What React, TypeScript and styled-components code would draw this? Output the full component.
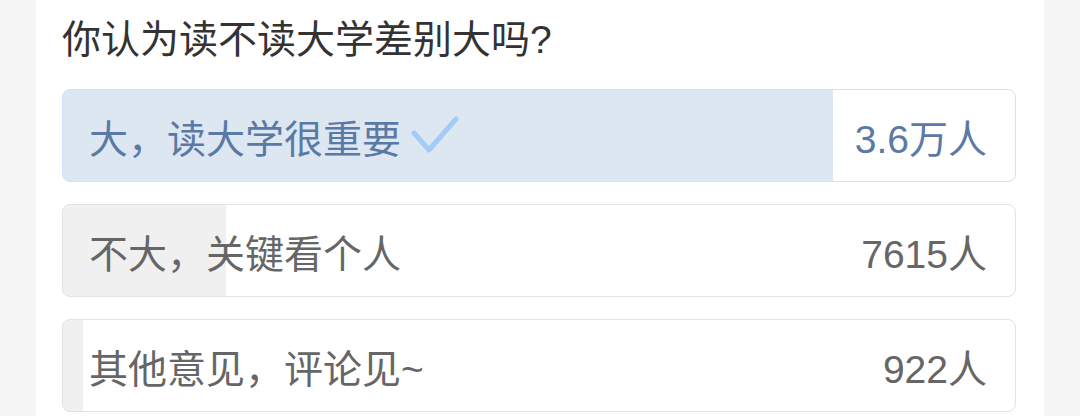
import styled, { createGlobalStyle } from 'styled-components'

const GlobalStyle = createGlobalStyle`
  html, body {
    margin: 0;
    padding: 0;
    background: #f5f5f5;
  }
  body {
    font-family: "Liberation Sans", "Noto Sans CJK SC", sans-serif;
  }
`

const Card = styled.section`
  width: 1008px;
  height: 416px;
  margin: 0 auto;
  background: #fff;
  padding: 14px 28px 0 26px;
  box-sizing: border-box;
`

const Question = styled.h2`
  margin: 0 0 23px;
  font-size: 39px;
  font-weight: 400;
  line-height: 52px;
  color: #333;
`

const Options = styled.div`
  display: flex;
  flex-direction: column;
  gap: 22px;
`

const Option = styled.div<{ $percent: number; $chosen?: boolean }>`
  height: 93px;
  box-sizing: border-box;
  display: flex;
  align-items: center;
  justify-content: space-between;
  padding: 0 28px 0 26px;
  border-radius: 8px;
  border: 1px solid ${(p) => (p.$chosen ? '#cfe2f9' : '#e2e2e2')};
  background: linear-gradient(
    to right,
    ${(p) => (p.$chosen ? '#dde7f2' : '#f0f0f0')} ${(p) => p.$percent}%,
    #fff ${(p) => p.$percent}%
  );
  color: ${(p) => (p.$chosen ? '#5a7aa5' : '#666')};
  font-size: 39px;
`

const Label = styled.span`
  display: flex;
  align-items: center;
  gap: 10px;
`

const Count = styled.span`
  white-space: nowrap;
`

const Check = () => (
  <svg width="48" height="40" viewBox="0 0 48 40" fill="none">
    <polyline
      points="3,17 18,34 45,3"
      stroke="#a4cbf6"
      strokeWidth="5"
      strokeLinecap="round"
      strokeLinejoin="round"
    />
  </svg>
)

type Choice = {
  text: string
  votes: number
  count: string
  chosen?: boolean
}

const choices: Choice[] = [
  { text: '大，读大学很重要', votes: 36000, count: '3.6万人', chosen: true },
  { text: '不大，关键看个人', votes: 7615, count: '7615人' },
  { text: '其他意见，评论见~', votes: 922, count: '922人' },
]

const total = choices.reduce((sum, c) => sum + c.votes, 0)

const App = () => {
  return (
    <>
      <GlobalStyle />
      <Card>
        <Question>你认为读不读大学差别大吗?</Question>
        <Options>
          {choices.map((c) => (
            <Option key={c.text} $percent={(c.votes / total) * 100} $chosen={c.chosen}>
              <Label>
                {c.text}
                {c.chosen && <Check />}
              </Label>
              <Count>{c.count}</Count>
            </Option>
          ))}
        </Options>
      </Card>
    </>
  )
}

export default App
